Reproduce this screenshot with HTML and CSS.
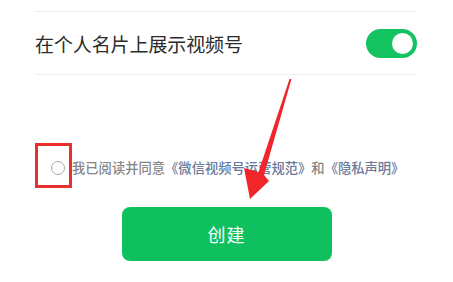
FILE: index.html
```html
<!DOCTYPE html>
<html lang="zh-CN">
<head>
<meta charset="utf-8">
<link rel="stylesheet" href="styles.css">
</head>
<body>
<div class="page">
  <div class="setting">
    <span class="label">在个人名片上展示视频号</span>
    <span class="switch"><span class="knob"></span></span>
  </div>
  <div class="agree">
    <span class="radio"></span>
    <span class="agree-text">我已阅读并同意<span class="link">《微信视频号运营规范》</span>和<span class="link">《隐私声明》</span></span>
    <span class="mark-box"></span>
  </div>
  <div class="actions">
    <button class="create">创建</button>
  </div>
  <svg class="arrow" width="453" height="282" viewBox="0 0 453 282">
    <polygon points="291.5,79 289.5,79 258.5,172 244,168 250,199 269,181 264,175" fill="#f0262b"/>
  </svg>
</div>
</body>
</html>
```

FILE: styles.css
```css
html, body {
  margin: 0;
  padding: 0;
  background: #ffffff;
}
body {
  font-family: "Noto Sans CJK SC", "Noto Sans", sans-serif;
  width: 453px;
  height: 282px;
  overflow: hidden;
}
.page {
  position: relative;
  padding: 11px 36px 0 35px;
  height: 271px;
}
.setting {
  display: flex;
  align-items: center;
  justify-content: space-between;
  height: 62px;
  border-top: 1px solid #f0f0f0;
  border-bottom: 1px solid #f0f0f0;
}
.label {
  font-size: 19px;
  color: #2b2b2b;
  letter-spacing: -0.1px;
}
.switch {
  position: relative;
  width: 51px;
  height: 29px;
  border-radius: 15px;
  background: #15c260;
  display: flex;
  align-items: center;
  justify-content: flex-end;
  padding-right: 1px;
  box-sizing: border-box;
}
.knob {
  width: 25px;
  height: 25px;
  border-radius: 50%;
  background: #ffffff;
  border: 2px solid #15c260;
  box-sizing: border-box;
  margin-right: 1px;
}
.agree {
  position: relative;
  display: flex;
  align-items: center;
  height: 20px;
  margin-top: 83px;
}
.radio {
  width: 12px;
  height: 12px;
  border: 1.6px solid #a8a8a8;
  border-radius: 50%;
  margin-left: 16px;
  margin-right: 7px;
  flex: none;
}
.agree-text {
  font-size: 13.3px;
  color: #868686;
  white-space: nowrap;
  line-height: 20px;
  font-weight: 500;
}
.link {
  color: #6a7a9c;
}
.mark-box {
  position: absolute;
  left: 0;
  top: -15px;
  width: 31px;
  height: 39px;
  border: 3px solid #ea2f2f;
}
.actions {
  display: flex;
  justify-content: center;
  margin-top: 29px;
  margin-left: -35px;
  margin-right: -36px;
}
.create {
  width: 210px;
  height: 54px;
  border: none;
  border-radius: 8px;
  background: #0fc15e;
  color: #ffffff;
  font-family: "Noto Sans CJK SC", sans-serif;
  font-size: 18px;
  letter-spacing: 1px;
}
.arrow {
  position: absolute;
  left: 0;
  top: 0;
  pointer-events: none;
}
```
